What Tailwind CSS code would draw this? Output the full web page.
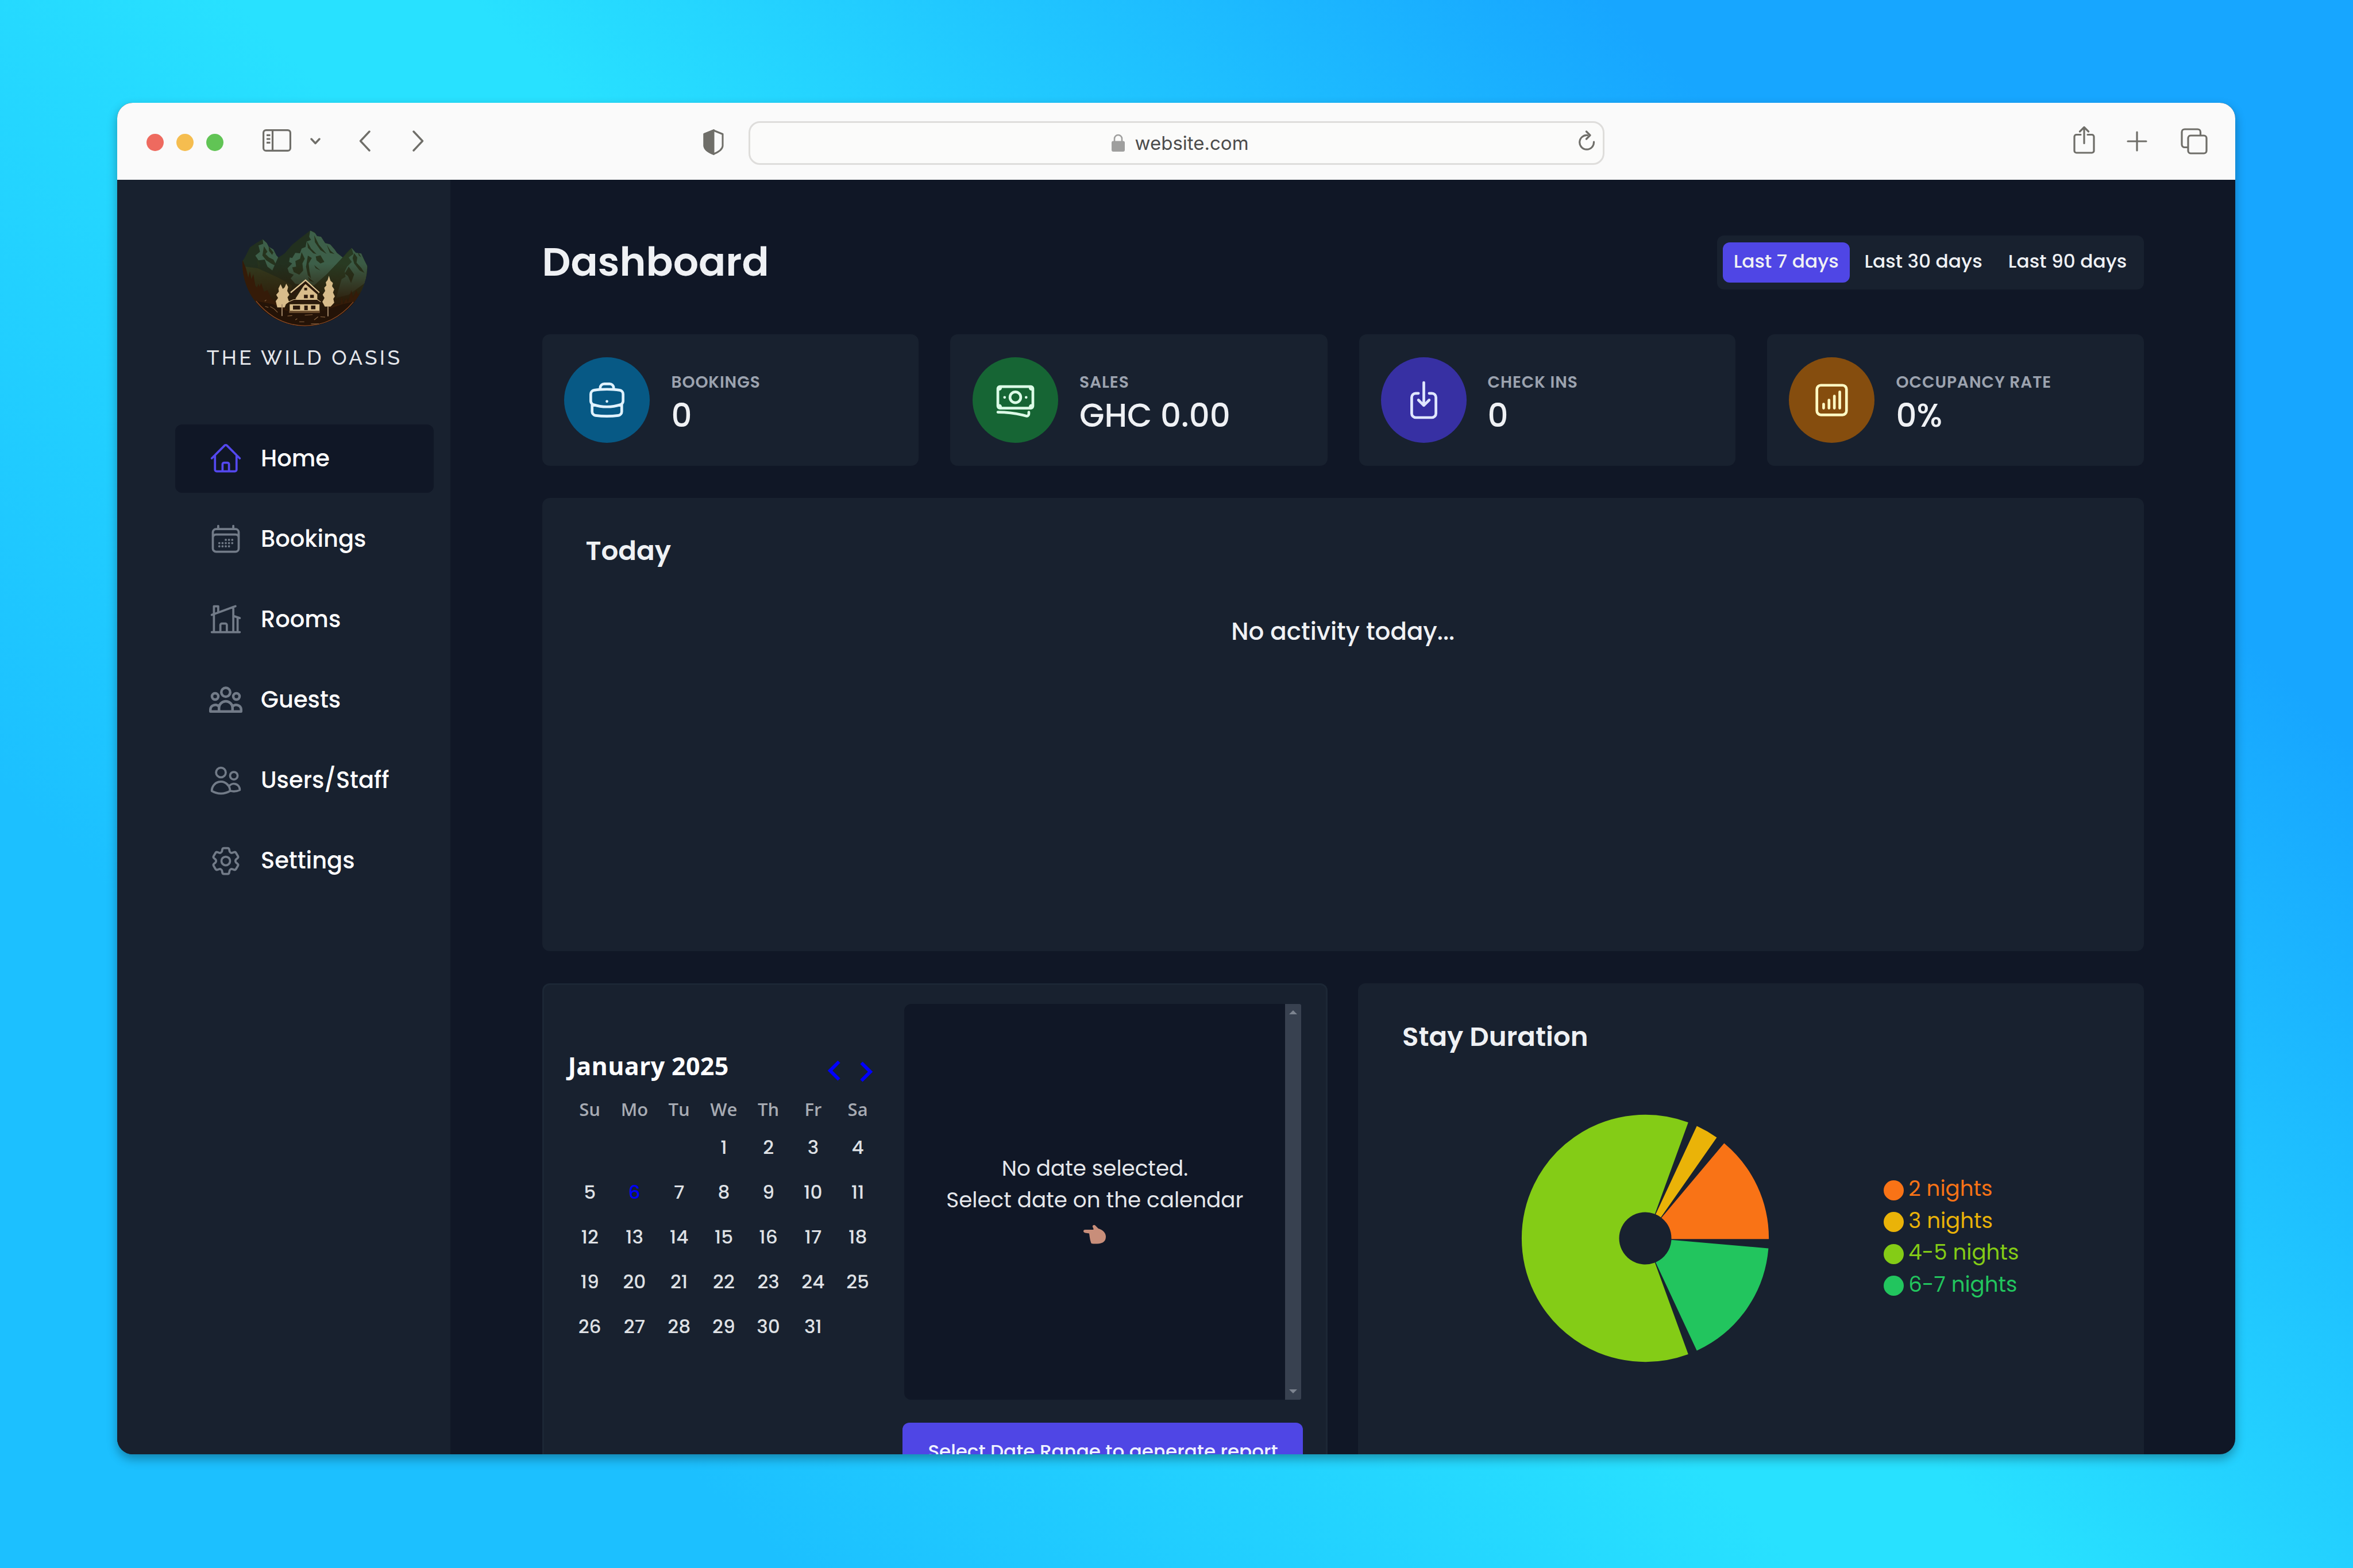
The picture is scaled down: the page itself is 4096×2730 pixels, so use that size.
<!DOCTYPE html>
<html lang="en">
<head>
<meta charset="utf-8">
<title>The Wild Oasis</title>
<script src="https://cdn.jsdelivr.net/npm/@tailwindcss/browser@4"></script>
</head>
<body class="w-[4096px] h-[2730px] overflow-hidden bg-[linear-gradient(45deg,#1cc0ff_20%,#28e1ff_46%,#28e1ff_52%,#17a6ff_81%)] font-[Poppins,Inter,sans-serif]">
<div class="w-[4096px] h-[2730px] pl-[204px] pt-[178.5px]">
<div class="w-[3687px] h-[2353.5px] rounded-[27px] overflow-hidden shadow-[0_8px_18px_rgba(0,0,0,0.32)] bg-[#101726] flex flex-col">

  <!-- Browser toolbar -->
  <header class="h-[134.5px] shrink-0 bg-[#fafafa] flex items-center pl-[50.7px] text-[#6f6e69]">
    <div class="flex gap-[21.6px] mt-1">
      <span class="size-[30.5px] rounded-full bg-[#ee6a5f]"></span>
      <span class="size-[30.5px] rounded-full bg-[#f5bd4f]"></span>
      <span class="size-[30.5px] rounded-full bg-[#61c455]"></span>
    </div>
    <svg class="w-[50px] h-[39px] ml-[67.7px] -mt-[3px]" viewBox="0 0 50 39" fill="none" stroke="currentColor" stroke-width="3.2"><rect x="1.6" y="1.6" width="46.8" height="35.8" rx="4.5"/><path d="M17.5 2v35M7 10.3h6.5M7 17h6.5M7 23.4h6.5"/></svg>
    <svg class="w-[18px] h-[12px] ml-[33px]" viewBox="0 0 18 12" fill="none" stroke="currentColor" stroke-width="3.4" stroke-linecap="round" stroke-linejoin="round"><path d="m2 2 7 7.5L16 2"/></svg>
    <svg class="w-[20px] h-[37px] ml-[66.5px]" viewBox="0 0 20 37" fill="none" stroke="currentColor" stroke-width="3.4" stroke-linecap="round" stroke-linejoin="round"><path d="M18 2 2.5 18.5 18 35"/></svg>
    <svg class="w-[20px] h-[37px] ml-[73.5px]" viewBox="0 0 20 37" fill="none" stroke="currentColor" stroke-width="3.4" stroke-linecap="round" stroke-linejoin="round"><path d="m2 2 15.5 16.5L2 35"/></svg>
    <svg class="w-[36px] h-[45px] ml-[485.5px] mt-[3px]" viewBox="0 0 36 45" fill="none" stroke="currentColor" stroke-width="3"><path d="M18 2 34 8.5v20C34 35 26 40 18 43.2 10 40 2 35 2 28.5v-20Z" stroke-linejoin="round"/><path d="M18 2v41C10 40 2 35 2 28.5v-20Z" fill="currentColor"/></svg>
    <div class="relative ml-[43px] mt-[6px] w-[1490px] h-[76px] rounded-[20px] border-[3px] border-[#dedddb] bg-[#fbfbfa] flex items-center justify-center pl-[13px] gap-[18px]">
      <svg class="w-[23px] h-[31px]" viewBox="0 0 23 31"><rect y="12.5" width="23" height="18.5" rx="3" fill="#9f9f9e"/><path d="M5 14V8.5a6.5 6.5 0 0 1 13 0V14" fill="none" stroke="#9f9f9e" stroke-width="2.6"/></svg>
      <span class="text-[33px] leading-[40px] text-[#4c4c4c] whitespace-nowrap font-[Inter]">website.com</span>
      <svg class="absolute right-[13px] top-[13px] w-[30px] h-[36px]" viewBox="0 0 30 36" fill="none" stroke="currentColor" stroke-width="3.2" stroke-linecap="round" stroke-linejoin="round"><path d="M16.5 8.5A12.4 12.4 0 1 0 27.5 20"/><path d="m14.5 2 6.5 6.5-6.5 6.5"/></svg>
    </div>
    <svg class="w-[38px] h-[49px] ml-[816px] -mt-[5px]" viewBox="0 0 38 49" fill="none" stroke="currentColor" stroke-width="3.2" stroke-linecap="round" stroke-linejoin="round"><path d="M13 15.5H5.500A3.5 3.5 0 0 0 2 19v24.500A3.5 3.5 0 0 0 5.5 47h27a3.5 3.5 0 0 0 3.5-3.500V19a3.5 3.5 0 0 0-3.500-3.500H25M19 30.500V2.500M11.5 10 19 2.5 26.5 10"/></svg>
    <svg class="w-[36px] h-[36px] ml-[55.5px]" viewBox="0 0 36 36" fill="none" stroke="currentColor" stroke-width="3.2" stroke-linecap="round"><path d="M18 2v32M2 18h32"/></svg>
    <svg class="w-[47px] h-[46px] ml-[57.5px]" viewBox="0 0 47 46" fill="none" stroke="currentColor" stroke-width="3.2"><rect x="13" y="13" width="32" height="31" rx="4.5"/><path d="M13 33.5H7A5 5 0 0 1 2 28.500V7a5 5 0 0 1 5-5h22.500a5 5 0 0 1 5 5v6"/></svg>
  </header>

  <div class="flex grow min-h-0">
    <!-- Sidebar -->
    <aside class="w-[579.5px] shrink-0 bg-[#18212f] pl-[101px] pr-[28.5px] pt-[87px] flex flex-col">
      <svg class="w-[219px] h-[169.3px] mx-auto shrink-0" viewBox="100 85 800 620">
        <defs>
          <linearGradient id="fade" x1="0" y1="0" x2="0" y2="1"><stop offset="0.35" stop-color="#2e1805" stop-opacity="0"/><stop offset="0.72" stop-color="#2c1806" stop-opacity="0.85"/><stop offset="1" stop-color="#1f1008"/></linearGradient>
          <clipPath id="bowl"><path d="M103 285 118 262 150 198 190 170 232 145 258 170 270 193 300 210 320 250 333 262 372 235 420 180 470 140 535 90 562 100 578 125 604 130 630 170 662 178 690 210 705 232 742 262 770 228 798 200 826 232 860 236 880 280 900 320A400 400 0 0 1 501 700 400 400 0 0 1 103 285Z"/></clipPath>
        </defs>
        <g clip-path="url(#bowl)">
          <path fill="#22301f" d="M100 85h800v620H100z"/>
          <path fill="#3d5f49" d="M535 90 528 130 540 150 512 160 505 195 480 205 470 235 440 232 420 265 405 262 400 290 420 300 390 330 400 360 430 372 410 395 440 430 560 440 640 370 742 262 690 200 600 125Z"/>
          <path fill="#26331d" d="M480 228 500 270 485 300 490 345 465 372 430 355 420 325 445 320 440 285 470 270ZM570 255 600 248 625 290 600 300 575 280ZM520 250 545 265 525 300 530 350 540 395 520 375 508 320ZM515 160 540 205 575 240 555 235 520 200ZM560 120 590 180 640 240 600 215 565 165ZM640 180 665 220 690 240 660 232ZM560 310 600 345 570 330ZM520 385 560 420 530 410Z"/>
          <path fill="#3d5f49" d="M232 145 235 175 205 185 215 225 185 250 205 280 245 275 262 320 300 350 335 345 330 262 300 205Z"/>
          <path fill="#26331d" d="M240 190 262 225 250 240 272 262 300 275 325 320 285 300 255 280 230 250ZM270 190 300 230 292 245 272 220ZM195 270 215 300 212 340 200 310Z"/>
          <path fill="#22301f" d="M330 262 350 330 400 420 470 440 420 500 260 420Z"/>
          <path fill="#283a22" d="M742 262 800 200 900 290 905 480 700 560 560 440 640 370Z"/>
          <path fill="#3b5b45" d="M798 200 810 240 780 262 800 290 770 320 755 350 760 385 735 400 720 450 700 520 780 500 890 420 900 300 870 235Z"/>
          <path fill="#26331d" d="M815 235 835 262 830 295 862 330 880 360 850 345 815 300 805 265ZM780 320 815 370 795 425 775 380 755 365ZM835 220 860 260 845 250Z"/>
          <path fill="#40421f" opacity=".6" d="M120 320 200 330 330 390 420 440 380 560 180 560Z"/>
          <path fill="url(#fade)" d="M100 85h800v620H100z"/>
          <path fill="#351b08" d="M100 270 125 330 140 390 150 350 160 400 172 368 185 440 195 455 205 430 212 450 222 425 240 480 262 470 285 520 330 560 400 600 620 600 700 560 728 560 735 510 745 560 765 520 775 550 797 470 808 520 828 470 840 500 860 480V700H100Z"/>
          <path fill="#241307" d="M190 540 300 560 380 600 620 600 740 560 830 540 700 700H300Z"/>
          <path fill="none" stroke="#8a4a26" stroke-width="5" d="M190 540Q320 697 501 697T810 545"/>
          <path fill="none" stroke="#8a6440" stroke-width="4" d="m245 540 10-8M248 574l20 6M280 575l25 15 22 22M390 635l30-3M440 660l12-8M465 672h32M500 630l50-4M560 660l25-20M600 640l30 2M540 685h50"/>
        </g>
        <g fill="#d8bc8b">
          <path d="M346 432 360 462 372 452 382 428 394 450 388 475 402 500 390 515 400 545 380 560 372 580H325L315 540 330 520 318 500 335 480 332 460Z"/>
          <path d="M654 378 664 410 680 425 674 445 688 465 680 485 692 510 682 525 688 550 665 575H628L612 545 626 520 614 500 630 475 624 455 638 440 634 420 646 405Z"/>
          <path d="M404 560h190v42H404zM440 525 505 425 580 485V530H455Z"/>
        </g>
        <path d="M355 560v75M648 575v62" stroke="#a58a6b" stroke-width="7" fill="none"/>
        <path fill="none" stroke="#dfc595" stroke-width="9" d="M410 486 505 407 592 487"/>
        <path fill="none" stroke="#2c1a0d" stroke-width="14" d="M420 498 505 422 584 492"/>
        <path fill="#2c1a0d" d="M408 535H588L600 552H398ZM497 455h18v16h-18zM495 500h24v22h-24zM534 500h24v20h-24zM425 568h45v26h-45zM497 568h22v30h-22zM540 568h28v24h-28z"/>
        <path d="M388 548 430 530H580L602 545" stroke="#dfc595" stroke-width="4" fill="none"/>
        <path fill="#6f5131" d="M400 602h196v13H400z"/>
      </svg>
      <div class="mt-[33.4px] h-[40px] leading-[40px] text-center text-[35.3px] font-medium text-[#e5e7eb] font-[Raleway,Lato] whitespace-nowrap tracking-[4.4px]">THE WILD OASIS</div>
      <nav class="mt-[96px] flex flex-col gap-[21.1px] text-[40px] font-medium text-white">
        <a class="h-[119px] rounded-[12px] bg-[#101726] flex items-center pl-[58px] gap-[31px]"><svg class="size-[60px] text-[#5448ef]" viewBox="0 0 24 24" fill="none" stroke="currentColor" stroke-width="1.5" stroke-linecap="round" stroke-linejoin="round"><path d="m2.25 12 8.954-8.955c.44-.439 1.152-.439 1.591 0L21.75 12M4.5 9.75v10.125c0 .621.504 1.125 1.125 1.125H9.75v-4.875c0-.621.504-1.125 1.125-1.125h2.25c.621 0 1.125.504 1.125 1.125V21h4.125c.621 0 1.125-.504 1.125-1.125V9.75M8.25 21h8.25"/></svg><span class="mb-px">Home</span></a>
        <a class="h-[119px] flex items-center pl-[58px] gap-[31px]"><svg class="size-[60px] text-[#727b88]" viewBox="0 0 24 24" fill="none" stroke="currentColor" stroke-width="1.5" stroke-linecap="round" stroke-linejoin="round"><path d="M6.75 3v2.25M17.25 3v2.25M3 18.75V7.5a2.25 2.25 0 0 1 2.25-2.25h13.5A2.25 2.25 0 0 1 21 7.5v11.25m-18 0A2.25 2.25 0 0 0 5.25 21h13.5A2.25 2.25 0 0 0 21 18.75m-18 0v-7.5A2.25 2.25 0 0 1 5.25 9h13.5A2.25 2.25 0 0 1 21 11.25v7.5m-9-6h.008v.008H12v-.008ZM12 15h.008v.008H12V15Zm0 2.25h.008v.008H12v-.008ZM9.75 15h.008v.008H9.75V15Zm0 2.25h.008v.008H9.75v-.008ZM7.5 15h.008v.008H7.5V15Zm0 2.25h.008v.008H7.5v-.008Zm6.75-4.5h.008v.008h-.008v-.008Zm0 2.25h.008v.008h-.008V15Zm0 2.25h.008v.008h-.008v-.008Zm2.25-4.5h.008v.008H16.5v-.008Zm0 2.25h.008v.008H16.5V15Z"/></svg><span class="mb-px">Bookings</span></a>
        <a class="h-[119px] flex items-center pl-[58px] gap-[31px]"><svg class="size-[60px] text-[#727b88]" viewBox="0 0 24 24" fill="none" stroke="currentColor" stroke-width="1.5" stroke-linecap="round" stroke-linejoin="round"><path d="M8.25 21v-4.875c0-.621.504-1.125 1.125-1.125h2.25c.621 0 1.125.504 1.125 1.125V21m0 0h4.5V3.545M12.75 21h7.5V10.75M2.25 21h1.5m18 0h-18M2.25 9l4.5-1.636M18.75 3l-1.5.545m0 6.205 3 1m1.5.5-1.5-.5M6.75 7.364V3h-3v18m3-13.636 10.5-3.819"/></svg><span class="mb-px">Rooms</span></a>
        <a class="h-[119px] flex items-center pl-[58px] gap-[31px]"><svg class="size-[60px] overflow-visible text-[#727b88]" viewBox="0 0 24 24" fill="none" stroke="currentColor" stroke-width="1.8" stroke-linejoin="round"><circle cx="12" cy="6.9" r="3.1"/><circle cx="4.6" cy="9.8" r="2.2"/><circle cx="19.4" cy="9.8" r="2.2"/><path d="M7.3 20.3v-2.6a4.7 4.5 0 0 1 9.4 0v2.6ZM7.3 20.3H1.300v-1.400a3.400 3.200 0 0 1 6-2M16.700 20.300h6v-1.400a3.400 3.200 0 0 0-6-2"/></svg><span class="mb-px">Guests</span></a>
        <a class="h-[119px] flex items-center pl-[58px] gap-[31px]"><svg class="size-[60px] text-[#727b88]" viewBox="0 0 24 24" fill="none" stroke="currentColor" stroke-width="1.5" stroke-linecap="round" stroke-linejoin="round"><path d="M15 19.128a9.38 9.38 0 0 0 2.625.372 9.337 9.337 0 0 0 4.121-.952 4.125 4.125 0 0 0-7.533-2.493M15 19.128v-.003c0-1.113-.285-2.16-.786-3.07M15 19.128v.106A12.318 12.318 0 0 1 8.624 21c-2.331 0-4.512-.645-6.374-1.766l-.001-.109a6.375 6.375 0 0 1 11.964-3.07M12 6.375a3.375 3.375 0 1 1-6.75 0 3.375 3.375 0 0 1 6.75 0Zm8.25 2.25a2.625 2.625 0 1 1-5.25 0 2.625 2.625 0 0 1 5.25 0Z"/></svg><span class="mb-px">Users/Staff</span></a>
        <a class="h-[119px] flex items-center pl-[58px] gap-[31px]"><svg class="size-[60px] text-[#727b88]" viewBox="0 0 24 24" fill="none" stroke="currentColor" stroke-width="1.5" stroke-linecap="round" stroke-linejoin="round"><path d="M9.594 3.94c.09-.542.56-.94 1.11-.94h2.593c.55 0 1.02.398 1.11.94l.213 1.281c.063.374.313.686.645.87.074.04.147.083.22.127.325.196.72.257 1.075.124l1.217-.456a1.125 1.125 0 0 1 1.37.49l1.296 2.247a1.125 1.125 0 0 1-.26 1.431l-1.003.827c-.293.241-.438.613-.43.992a7.723 7.723 0 0 1 0 .255c-.008.378.137.75.43.991l1.004.827c.424.35.534.955.26 1.43l-1.298 2.247a1.125 1.125 0 0 1-1.369.491l-1.217-.456c-.355-.133-.75-.072-1.076.124a6.47 6.47 0 0 1-.22.128c-.331.183-.581.495-.644.869l-.213 1.281c-.09.543-.56.94-1.11.94h-2.594c-.55 0-1.019-.398-1.11-.94l-.213-1.281c-.062-.374-.312-.686-.644-.87a6.52 6.52 0 0 1-.22-.127c-.325-.196-.72-.257-1.076-.124l-1.217.456a1.125 1.125 0 0 1-1.369-.49l-1.297-2.247a1.125 1.125 0 0 1 .26-1.431l1.004-.827c.292-.24.437-.613.43-.991a6.932 6.932 0 0 1 0-.255c.007-.38-.138-.751-.43-.992l-1.004-.827a1.125 1.125 0 0 1-.26-1.43l1.297-2.247a1.125 1.125 0 0 1 1.37-.491l1.216.456c.356.133.751.072 1.076-.124.072-.044.146-.086.22-.128.332-.183.582-.495.644-.869l.214-1.28Z"/><path d="M15 12a3 3 0 1 1-6 0 3 3 0 0 1 6 0Z"/></svg><span class="mb-px">Settings</span></a>
      </nav>
    </aside>

    <!-- Dashboard -->
    <main class="grow pl-[160px] pr-[159px] pt-[96.6px] flex flex-col text-[#eff1f4]">
      <div class="h-[94.8px] shrink-0 flex items-center justify-between">
        <h1 class="text-[69.6px] leading-[80px] font-semibold -mt-[2px]">Dashboard</h1>
        <div class="h-[94.8px] w-[743px] rounded-[12px] bg-[#18212f] flex items-center pl-[10px] text-[32.8px] font-medium whitespace-nowrap">
          <span class="w-[220.6px] h-[70px] rounded-[12px] bg-[#4f46e5] flex items-center justify-center pb-[4px]">Last 7 days</span>
          <span class="w-[257px] flex justify-center pb-[4px]">Last 30 days</span>
          <span class="w-[245px] flex justify-center pb-[4px]">Last 90 days</span>
        </div>
      </div>

      <div class="mt-[77.3px] shrink-0 grid grid-cols-[655.5px_656.5px_655.5px_656px] justify-between h-[229px]">
        <section class="rounded-[13px] bg-[#18212f] flex items-center pl-[38.5px] gap-[37.5px]">
          <div class="size-[149px] shrink-0 rounded-full bg-[#075985] text-[#e0f2fe] flex items-center justify-center"><svg class="size-[75px]" viewBox="0 0 24 24" fill="none" stroke="currentColor" stroke-width="1.5" stroke-linecap="round" stroke-linejoin="round"><path d="M20.25 14.15v4.25c0 1.094-.787 2.036-1.872 2.18-2.087.277-4.216.42-6.378.42s-4.291-.143-6.378-.42c-1.085-.144-1.872-1.086-1.872-2.18v-4.25m16.5 0a2.18 2.18 0 0 0 .75-1.661V8.706c0-1.081-.768-2.015-1.837-2.175a48.114 48.114 0 0 0-3.413-.387m4.5 8.006c-.194.165-.42.295-.673.38A23.978 23.978 0 0 1 12 15.75c-2.648 0-5.195-.429-7.577-1.22a2.016 2.016 0 0 1-.673-.38m0 0A2.18 2.18 0 0 1 3 12.489V8.706c0-1.081.768-2.015 1.837-2.175a48.111 48.111 0 0 1 3.413-.387m7.5 0V5.25A2.25 2.25 0 0 0 13.5 3h-3a2.25 2.25 0 0 0-2.25 2.25v.894m7.5 0a48.667 48.667 0 0 0-7.5 0M12 12.75h.008v.008H12v-.008Z"/></svg></div>
          <div class="self-start pt-[66px] whitespace-nowrap"><div class="text-[28.1px] leading-[34px] tracking-[0.9px] font-semibold text-[#9ca3af]">BOOKINGS</div><div class="text-[56.2px] leading-[83px] font-medium">0</div></div>
        </section>
        <section class="rounded-[13px] bg-[#18212f] flex items-center pl-[39px] gap-[37px]">
          <div class="size-[149px] shrink-0 rounded-full bg-[#166534] text-[#dcfce7] flex items-center justify-center"><svg class="size-[75px]" viewBox="0 0 24 24" fill="none" stroke="currentColor" stroke-width="1.5" stroke-linecap="round" stroke-linejoin="round"><path d="M2.25 18.75a60.07 60.07 0 0 1 15.797 2.101c.727.198 1.453-.342 1.453-1.096V18.75M3.75 4.5v.75A.75.75 0 0 1 3 6h-.75m0 0v-.375c0-.621.504-1.125 1.125-1.125H20.25M2.25 6v9m18-10.5v.75c0 .414.336.75.75.75h.75m-1.5-1.5h.375c.621 0 1.125.504 1.125 1.125v9.75c0 .621-.504 1.125-1.125 1.125h-.375m1.5-1.5H21a.75.75 0 0 0-.75.75v.75m0 0H3.75m0 0h-.375a1.125 1.125 0 0 1-1.125-1.125V15m1.5 1.5v-.75A.75.75 0 0 0 3 15h-.75M15 10.5a3 3 0 1 1-6 0 3 3 0 0 1 6 0Zm3 0h.008v.008H18V10.5Zm-12 0h.008v.008H6V10.5Z"/></svg></div>
          <div class="self-start pt-[66px] whitespace-nowrap"><div class="text-[28.1px] leading-[34px] tracking-[0.9px] font-semibold text-[#9ca3af]">SALES</div><div class="text-[56.2px] leading-[83px] font-medium">GHC 0.00</div></div>
        </section>
        <section class="rounded-[13px] bg-[#18212f] flex items-center pl-[38.5px] gap-[36.5px]">
          <div class="size-[149px] shrink-0 rounded-full bg-[#3730a3] text-[#e0e7ff] flex items-center justify-center"><svg class="size-[75px]" viewBox="0 0 24 24" fill="none" stroke="currentColor" stroke-width="1.5" stroke-linecap="round" stroke-linejoin="round"><path d="M9 8.25H7.5a2.25 2.25 0 0 0-2.25 2.25v9a2.25 2.25 0 0 0 2.25 2.25h9a2.25 2.25 0 0 0 2.25-2.25v-9a2.25 2.25 0 0 0-2.25-2.25H15M9 12l3 3m0 0 3-3m-3 3V2.25"/></svg></div>
          <div class="self-start pt-[66px] whitespace-nowrap"><div class="text-[28.1px] leading-[34px] tracking-[0.9px] font-semibold text-[#9ca3af]">CHECK INS</div><div class="text-[56.2px] leading-[83px] font-medium">0</div></div>
        </section>
        <section class="rounded-[13px] bg-[#18212f] flex items-center pl-[38px] gap-[37.5px]">
          <div class="size-[149px] shrink-0 rounded-full bg-[#854d0e] text-[#fef9c3] flex items-center justify-center"><svg class="size-[75px]" viewBox="0 0 24 24" fill="none" stroke="currentColor" stroke-width="1.5" stroke-linecap="round" stroke-linejoin="round"><path d="M7.5 14.25v2.25m3-4.5v4.5m3-6.75v6.75m3-9v9M6 20.25h12A2.25 2.25 0 0 0 20.25 18V6A2.25 2.25 0 0 0 18 3.75H6A2.25 2.25 0 0 0 3.75 6v12A2.25 2.25 0 0 0 6 20.25Z"/></svg></div>
          <div class="self-start pt-[66px] whitespace-nowrap"><div class="text-[28.1px] leading-[34px] tracking-[0.9px] font-semibold text-[#9ca3af]">OCCUPANCY RATE</div><div class="text-[56.2px] leading-[83px] font-medium">0%</div></div>
        </section>
      </div>

      <section class="mt-[56px] h-[789.5px] shrink-0 rounded-[13px] bg-[#18212f] px-[76px] pt-[62px]">
        <h2 class="text-[46.8px] leading-[60px] font-semibold">Today</h2>
        <p class="mt-[81px] text-[42px] leading-[60px] font-medium text-center">No activity today...</p>
      </section>

      <div class="mt-[56px] h-[900px] shrink-0 grid grid-cols-[1367.5px_1368px] justify-between">
        <section class="rounded-[13px] bg-[#18212f] border-[3px] border-[#1c2735] pl-[41.3px] flex">
          <div class="w-[544.2px] pt-[111.4px]">
            <div class="h-[60px] flex items-center pr-[12px] font-['Segoe_UI','Open_Sans']">
              <span class="text-[43px] leading-[58px] pb-[2px] pl-px tracking-[0.3px] font-bold text-white">January 2025</span>
              <svg class="w-[23px] h-[36px] ml-auto mt-[15px]" viewBox="0 0 23 36" fill="none" stroke="#0000ff" stroke-width="6"><path d="M20.5 2.5 5 18l15.5 15.5"/></svg>
              <svg class="w-[23px] h-[36px] ml-[34px] mt-[18px]" viewBox="0 0 23 36" fill="none" stroke="#0000ff" stroke-width="6"><path d="M2.5 2.5 18 18 2.5 33.5"/></svg>
            </div>
            <div class="mt-[16px] grid grid-cols-7 text-center text-[31px] leading-[56.6px] font-semibold text-[#a7abb3] font-['Segoe_UI','Open_Sans']"><span>Su</span><span>Mo</span><span>Tu</span><span>We</span><span>Th</span><span>Fr</span><span>Sa</span></div>
            <div class="grid grid-cols-7 text-center text-[32.8px] leading-[77.9px] font-medium text-[#dfe1e5]"><span class="col-start-4">1</span><span>2</span><span>3</span><span>4</span><span>5</span><span class="text-[#0000ff]">6</span><span>7</span><span>8</span><span>9</span><span>10</span><span>11</span><span>12</span><span>13</span><span>14</span><span>15</span><span>16</span><span>17</span><span>18</span><span>19</span><span>20</span><span>21</span><span>22</span><span>23</span><span>24</span><span>25</span><span>26</span><span>27</span><span>28</span><span>29</span><span>30</span><span>31</span></div>
          </div>
          <div class="w-[697px] ml-[39.5px] pt-[32.4px]">
            <div class="mx-[3px] h-[689px] rounded-l-[12px] rounded-r-[3px] overflow-hidden bg-[#101726] flex">
              <div class="grow pt-[259px] text-center text-[37.3px] leading-[55px] text-[#e5e7eb] whitespace-nowrap">
                <p>No date selected.</p>
                <p>Select date on the calendar</p>
                <svg class="w-[39px] h-[34px] mx-auto mt-[15px]" viewBox="0 0 39 34"><path fill="#c88e7a" d="M3 9h13c1 0 2-.5 1.5-1.5L16 4c-.8-2.5 2.5-4.5 4.5-2.5L26 7c8 2 13 8 13 14 0 8-5 11.5-12 12.2-5 .5-9 .5-13-.2-2-3-3-10-4-17.5L3 14.5c-4-.5-4-5.5 0-5.5Z"/></svg>
              </div>
              <div class="w-[28.2px] bg-[#384150] flex flex-col justify-between items-center py-[11px]">
                <svg class="w-[14px] h-[7px]" viewBox="0 0 14 7"><path fill="#7d8490" d="M0 7 7 0l7 7Z"/></svg>
                <svg class="w-[14px] h-[7px]" viewBox="0 0 14 7"><path fill="#7d8490" d="M0 0h14L7 7Z"/></svg>
              </div>
            </div>
            <button class="mt-[40px] w-full h-[101px] rounded-[12px] bg-[#4f46e5] text-[32.6px] leading-[100px] font-medium text-[#eef2ff] whitespace-nowrap">Select Date Range to generate report</button>
          </div>
        </section>
        <section class="rounded-[13px] bg-[#18212f] pl-[77px] pt-[62.5px]">
          <h2 class="text-[46.6px] leading-[60px] font-semibold">Stay Duration</h2>
          <div class="mt-[103px] ml-[205.3px] flex items-center">
            <svg id="pie" class="w-[436px] h-[436px]" viewBox="-218 -218 436 436" stroke-width="2.6"></svg>
            <ul class="ml-[197px] -mt-[5px] text-[37.2px] leading-[55.4px] whitespace-nowrap">
              <li class="flex items-center gap-[8px] text-[#f97316]"><i class="size-[35px] mt-[5px] rounded-full bg-[#f97316]"></i>2 nights</li>
              <li class="flex items-center gap-[8px] text-[#eab308]"><i class="size-[35px] mt-[5px] rounded-full bg-[#eab308]"></i>3 nights</li>
              <li class="flex items-center gap-[8px] text-[#84cc16]"><i class="size-[35px] mt-[5px] rounded-full bg-[#84cc16]"></i>4-5 nights</li>
              <li class="flex items-center gap-[8px] text-[#22c55e]"><i class="size-[35px] mt-[5px] rounded-full bg-[#22c55e]"></i>6-7 nights</li>
            </ul>
          </div>
        </section>
      </div>
    </main>
  </div>
</div>
</div>
<script>
  // start angle, end angle, colour; 5 degrees of padding between slices
  const slices = [[0, 50, '#f97316'], [55, 65, '#eab308'], [70, 290, '#84cc16'], [295, 355, '#22c55e']];
  const R = 213.8, r = 46.8;
  const pt = (rad, deg) => (rad * Math.cos(deg * Math.PI / 180)).toFixed(2) + ' ' + (-rad * Math.sin(deg * Math.PI / 180)).toFixed(2);
  document.getElementById('pie').innerHTML = slices.map(([a, b, c]) => {
    const big = b - a > 180 ? 1 : 0;
    return `<path fill="${c}" stroke="${c}" d="M${pt(R, a)}A${R} ${R} 0 ${big} 0 ${pt(R, b)}L${pt(r, b)}A${r} ${r} 0 ${big} 1 ${pt(r, a)}Z"/>`;
  }).join('');
</script>
</body>
</html>
